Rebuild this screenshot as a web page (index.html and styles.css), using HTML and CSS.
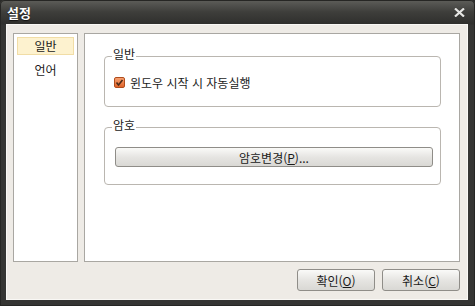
FILE: index.html
```html
<!DOCTYPE html>
<html lang="ko">
<head>
    <meta charset="UTF-8">
    <title>설정</title>
    <link rel="stylesheet" href="styles.css">
</head>
<body>
    <div class="window">
        <div class="titlebar">
            <span class="title">설정</span>
            <button class="close-btn" aria-label="닫기">
                <svg width="11" height="9" viewBox="0 0 11 9">
                    <path d="M1 0.5 L10 8.5 M10 0.5 L1 8.5" stroke="#e6e6e4" stroke-width="2.2" fill="none"/>
                </svg>
            </button>
        </div>

        <div class="content">
            <div class="panes">
                <ul class="menu">
                    <li class="menu-item selected">일반</li>
                    <li class="menu-item">언어</li>
                </ul>

                <div class="page">
                    <fieldset class="group group-general">
                        <legend>일반</legend>
                        <label class="check-row">
                            <span class="checkbox">
                                <svg width="11" height="11" viewBox="0 0 11 11">
                                    <path d="M2.5 5.5 L4.5 8 L8.5 3" stroke="#4a2a18" stroke-width="1.6" fill="none"/>
                                </svg>
                            </span>
                            윈도우 시작 시 자동실행
                        </label>
                    </fieldset>

                    <fieldset class="group group-password">
                        <legend>암호</legend>
                        <button class="btn btn-wide">암호변경(<u>P</u>)...</button>
                    </fieldset>
                </div>
            </div>

            <div class="footer">
                <button class="btn">확인(<u>O</u>)</button>
                <button class="btn">취소(<u>C</u>)</button>
            </div>
        </div>
    </div>
</body>
</html>
```

FILE: styles.css
```css
body {
    margin: 0;
    background: #2b2b29;
    font-family: "Noto Sans CJK KR", "Noto Sans", sans-serif;
    font-size: 12px;
    color: #1a1a1a;
}

.window {
    width: 475px;
    height: 306px;
    box-sizing: border-box;
    padding: 0 7px 6px 6px;
    display: flex;
    flex-direction: column;
    border-radius: 5px 5px 0 0;
    background: linear-gradient(to bottom, #5e5e5a 0px, #3e3e3b 12px, #2f2f2d 24px, #353533 25px, #353533 100%);
    box-shadow: inset 0 0 0 1px #262624;
}

.titlebar {
    height: 24px;
    display: flex;
    align-items: center;
    justify-content: space-between;
}

.title {
    color: #ffffff;
    font-weight: bold;
    font-size: 13px;
    margin-left: 1px;
    text-shadow: 0 1px 1px #111;
}

.close-btn {
    background: none;
    border: none;
    padding: 0;
    margin-right: 3px;
    display: flex;
    cursor: pointer;
}

.content {
    flex: 1;
    display: flex;
    flex-direction: column;
    background: #eeebe6;
    border: 1px solid #f9f8f5;
    padding: 8px 7px 8px 6px;
}

.panes {
    flex: 1;
    display: flex;
    gap: 6px;
}

.menu {
    width: 65px;
    box-sizing: border-box;
    margin: 0;
    padding: 3px;
    list-style: none;
    background: #ffffff;
    border: 1px solid #a9a7a2;
    display: flex;
    flex-direction: column;
    gap: 6px;
}

.menu-item {
    height: 18px;
    box-sizing: border-box;
    line-height: 16px;
    text-align: center;
    border: 1px solid transparent;
}

.menu-item.selected {
    background: #fdf2cf;
    border-color: #f1dda6;
}

.page {
    flex: 1;
    background: #ffffff;
    border: 1px solid #a9a7a2;
    padding: 14px 18px 0 19px;
}

.group {
    margin: 0;
    min-width: 0;
    border: 1px solid #bab6b0;
    border-radius: 4px;
}

.group legend {
    font-size: 12px;
    line-height: 12px;
    padding: 0 1px 4px;
}

.group-general {
    padding: 10px 9px 16px 9px;
}

.group-general legend {
    margin-left: -2px;
}

.group-password {
    margin-top: 12px;
    padding: 12px 7px 17px 10px;
}

.group-password legend {
    margin-left: -3px;
}

.check-row {
    height: 16px;
    display: flex;
    align-items: center;
    gap: 5px;
}

.checkbox {
    width: 11px;
    height: 11px;
    box-sizing: border-box;
    display: flex;
    border: 1px solid #b04c1c;
    border-radius: 2px;
    background: linear-gradient(to bottom, #f7a070, #e0642a);
}

.checkbox svg {
    margin: -1px;
}

.btn {
    font-family: inherit;
    font-size: 12px;
    color: #1a1a1a;
    height: 22px;
    width: 78px;
    padding: 0;
    border: 1px solid #8f8d88;
    border-radius: 3px;
    background: linear-gradient(to bottom, #fafaf8, #e6e5e2 50%, #d9d8d4);
    cursor: pointer;
}

.btn u {
    text-underline-offset: 1px;
}

.btn-wide {
    display: block;
    width: 100%;
    height: 20px;
}

.footer {
    margin-top: 7px;
    display: flex;
    justify-content: flex-end;
    gap: 7px;
}
```
